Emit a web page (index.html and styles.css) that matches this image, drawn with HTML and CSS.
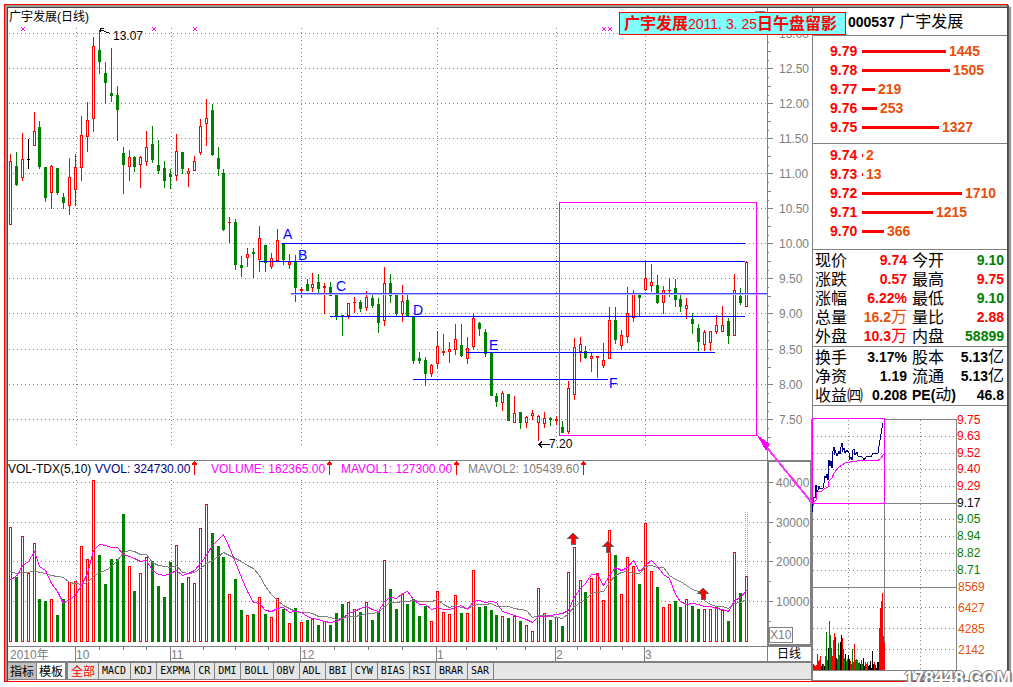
FILE: index.html
```html
<!DOCTYPE html>
<html lang="zh-CN">
<head>
<meta charset="utf-8">
<title>广宇发展 000537</title>
<link rel="stylesheet" href="styles.css">
</head>
<body>
<div class="window">
  <main class="charts">
    <svg class="kline" viewBox="8 8 804 654" role="img" aria-label="广宇发展 日线">
      <g id="grid"></g>
      <g id="candles"></g>
      <g id="volumes"></g>
      <g class="level">
        <path d="M282 243.5H745M259 261.5H745M330 316.5H745M466 352.5H715M413 379.5H608"/>
        <path class="soft" d="M290 294.5H767"/><path class="mid" d="M291 293.5H767"/>
      </g>
      <g class="letters">
        <text x="283" y="239">A</text><text x="298" y="260">B</text><text x="336" y="291">C</text>
        <text x="413" y="315">D</text><text x="489" y="350">E</text><text x="609" y="388">F</text>
      </g>
      <path class="axis" d="M8 460.5H812M767.5 8V461M8 646.5H812M8 661.5H812M767.5 646V662M755 11.5H765"/>
      <path class="axis thick" d="M768 461V646M767 461H812M767 645H812M811 461V646"/>
      <rect class="axis" x="769.5" y="627.5" width="23" height="15"/>
      <text class="muted" x="770" y="639">X10</text>
      <text x="9" y="21">广宇发展(日线)</text>
      <text x="777" y="658">日线</text>
      <text x="113" y="40">13.07</text><path class="ink" d="M110 33.5L100 29.5M104 28.5H100V32"/>
      <text x="549" y="448">7.20</text><path class="ink" d="M550 444.5H539M542 441.5L539 444.5L542 447.5"/>
      <path class="mark" d="M21 27l4 4m0-4l-4 4M152 27l4 4m0-4l-4 4M193 27l4 4m0-4l-4 4M602 27l4 4m0-4l-4 4M608 27l4 4m0-4l-4 4"/>
      <g>
        <text x="8" y="473">VOL-TDX(5,10)</text>
        <text class="navy" x="95" y="473">VVOL: 324730.00</text>
        <text class="pink" x="211" y="473">VOLUME: 162365.00</text>
        <text class="pink" x="341" y="473">MAVOL1: 127300.00</text>
        <text class="muted" x="468" y="473">MAVOL2: 105439.60</text>
        <path class="up" d="M194.5 475V461M192 463.5H197M193 462.5H196M192 464.5H197M329.5 475V461M327 463.5H332M328 462.5H331M327 464.5H332M456.5 475V461M454 463.5H459M455 462.5H458M454 464.5H459M583.5 475V461M581 463.5H586M582 462.5H585M581 464.5H586"/>
      </g>
      <g class="signal">
        <path d="M573 533l5 5h-3v6h-4v-6h-3z"/><path d="M608 541l5 5h-3v6h-4v-6h-3z"/><path d="M703 588l5 5h-3v6h-4v-6h-3z"/>
      </g>
      <path class="forecast" d="M745.5 512V576M747.5 512V576"/>
      <rect class="zoombox" x="559.5" y="202.5" width="197" height="233"/>
      <path class="link" d="M760 439L812 503"/><path class="head" d="M757 435L770 444L768 447L766 451Z"/>
    </svg>
    <nav class="tabs">
      <button class="tab dark">指标</button><button class="tab white">模板</button><button class="tab all">全部</button><button class="tab">MACD</button><button class="tab">KDJ</button><button class="tab">EXPMA</button><button class="tab">CR</button><button class="tab">DMI</button><button class="tab">BOLL</button><button class="tab">OBV</button><button class="tab">ADL</button><button class="tab">BBI</button><button class="tab">CYW</button><button class="tab">BIAS</button><button class="tab">RSI</button><button class="tab">BRAR</button><button class="tab">SAR</button>
    </nav>
  </main>
  <aside class="panel">
    <h1 class="name"><b>000537</b> 广宇发展</h1>
    <ul class="book asks">
      <li><b>9.79</b><i style="width:84px"></i><span>1445</span></li>
      <li><b>9.78</b><i style="width:88px"></i><span>1505</span></li>
      <li><b>9.77</b><i style="width:13px"></i><span>219</span></li>
      <li><b>9.76</b><i style="width:15px"></i><span>253</span></li>
      <li><b>9.75</b><i style="width:77px"></i><span>1327</span></li>
    </ul>
    <ul class="book bids">
      <li><b>9.74</b><i style="width:1px"></i><span>2</span></li>
      <li><b>9.73</b><i style="width:1px"></i><span>13</span></li>
      <li><b>9.72</b><i style="width:100px"></i><span>1710</span></li>
      <li><b>9.71</b><i style="width:71px"></i><span>1215</span></li>
      <li><b>9.70</b><i style="width:22px"></i><span>366</span></li>
    </ul>
    <table class="stats">
      <tr><th>现价</th><td class="red">9.74</td><th>今开</th><td class="green">9.10</td></tr>
      <tr><th>涨跌</th><td class="red">0.57</td><th>最高</th><td class="red">9.75</td></tr>
      <tr><th>涨幅</th><td class="red">6.22%</td><th>最低</th><td class="green">9.10</td></tr>
      <tr><th>总量</th><td class="orange">16.2<span>万</span></td><th>量比</th><td class="red">2.88</td></tr>
      <tr><th>外盘</th><td class="red">10.3<span>万</span></td><th>内盘</th><td class="green">58899</td></tr>
    </table>
    <table class="stats">
      <tr><th>换手</th><td>3.17%</td><th>股本</th><td>5.13<span>亿</span></td></tr>
      <tr><th>净资</th><td>1.19</td><th>流通</th><td>5.13<span>亿</span></td></tr>
      <tr><th>收益㈣</th><td>0.208</td><th class="pe">PE(<span>动</span>)</th><td>46.8</td></tr>
    </table>
    <svg class="intraday" viewBox="813 406 194 275" role="img" aria-label="分时走势">
      <path class="dots" d="M813 436.5H956M813 453.5H956M813 469.5H956M813 486.5H956M813 519.5H956M813 536.5H956M813 553.5H956M813 570.5H956M813 607.5H956M813 628.5H956M813 649.5H956M848.5 420V670M920.5 420V670"/>
      <path class="axis" d="M884 419.5H956.5V670.5H812M812 503.5H956M812 587.5H956M884.5 419V670M812 680.5H1007"/>
      <path class="axis thick" d="M812 419V681"/>
      <g id="ticks"></g>
      <path class="avg" d="M812.500 508L814 502L816 500V493L818 491H822L824 489L828 487L829 481L832 478L834 473L838 468L842 465L845 463L850 462L857 461L878 460.500L881 458L884 454"/>
      <path class="price" d="M812.500 512V504L814 497L815 498L816 485L817 492L818 490L819 486L820 489L823 488L824 483L825 476L826 478L827 474L828 480L829 460L830 466L831 461L832 468L833 451L834 447V455L835 450L837 456L839 451L840 454L841 447L842 443V452L844 448L845 453L847 450L849 453V460L851 457L852 460V451L854 449L855 455L857 452L858 456H861L863 458L864 460L866 457L869 456L871 457L873 453L876 454L878 453L880 440L882 428L883 423"/>
      <rect class="zoombox" x="812.5" y="418.5" width="72" height="85"/>
      <g class="scale">
        <g class="red"><text x="957" y="424">9.75</text><text x="957" y="440">9.63</text><text x="957" y="457">9.52</text><text x="957" y="473">9.40</text><text x="957" y="490">9.29</text></g>
        <text x="957" y="507">9.17</text>
        <g class="green"><text x="957" y="523">9.05</text><text x="957" y="540">8.94</text><text x="957" y="557">8.82</text><text x="957" y="574">8.71</text></g>
        <g class="orange"><text x="958" y="591">8569</text><text x="958" y="612">6427</text><text x="958" y="633">4285</text><text x="958" y="654">2142</text></g>
      </g>
    </svg>
  </aside>
  <div class="banner"><b>广宇发展</b>2011. 3. 25<b>日午盘留影</b></div>
  <div class="site">178448.COM</div>
</div>
<script src="chart.js"></script>
</body>
</html>
```

FILE: styles.css
```css
* { box-sizing: border-box; }
body {
  margin: 0;
  padding: 4px 5px 0 4px;
  background: #fff;
  color: #000;
  font: 12px/16px "Liberation Sans", "Noto Sans CJK SC", sans-serif;
}
.window {
  position: relative;
  display: grid;
  grid-template-columns: minmax(0, 1fr) 195px;
  border: 1px solid #f00;
  box-shadow: inset 2px 2px #999, inset 3px 3px #444, 1px 1px #555, 3px 3px 1px #999;
  padding: 3px 0 0 3px;
}
.charts { min-width: 0; }
svg { display: block; width: 100%; overflow: visible; }
svg path, svg rect { shape-rendering: crispEdges; }
.axis { stroke: gray; fill: none; }
.thick { stroke-width: 2; }
.dots { stroke: gray; fill: none; stroke-dasharray: 1 3; }
.muted { fill: gray; }
.navy { fill: #000080; }
.pink { fill: #f0f; }
.ink { stroke: #000; fill: none; }
.mark, .zoombox { stroke: #f0f; fill: none; }
.link { stroke: #f3f; stroke-width: 2; }
.head { fill: #f0f; }
.up { stroke: #f00; stroke-width: 1; }
.level path { stroke: #00f; }
.level .mid { stroke: #44f; }
.level .soft { stroke: #bbf; }
.letters { font-size: 14px; fill: #00f; }
.r { stroke: #f00; fill: #fff; }
.rf { fill: #f00; }
.g { fill: #008000; }
.k { fill: #000; }
.ma { fill: none; }
.ma5, .avg { stroke: #f0f; fill: none; }
.ma10 { stroke: gray; }
.price { stroke: #000080; fill: none; }
.signal path { fill: #f00; stroke: #666; }
.forecast { stroke: #c0c000; stroke-dasharray: 1 1; }
.tabs {
  display: flex;
  height: 18px;
  border: solid gray;
  border-width: 1px 0;
  background: #e6e6e6;
}
.tab {
  padding: 0 4px 0 3px;
  border: 0;
  border-right: 1px solid gray;
  background: #e6e6e6;
  color: #000;
  font: 10px/16px "DejaVu Sans Mono", monospace;
}
.dark, .white, .all {
  padding: 0 2px;
  font: 12px/16px "Noto Sans CJK SC", sans-serif;
}
.dark { background: #c0c0c0; }
.white { background: #fff; border-right-width: 3px; }
.all { color: #f00; padding: 0 3px; }
.panel { border-left: 1px solid gray; }
.name {
  margin: 0;
  height: 28px;
  padding: 0 0 0 35px;
  border-bottom: 1px solid gray;
  font-weight: 400;
  font-size: 16px;
  line-height: 28px;
}
.name b { font-size: 14px; }
.book {
  margin: 0;
  padding: 6px 0;
  border-bottom: 1px solid gray;
  list-style: none;
  font: bold 14px/19px "Liberation Sans", sans-serif;
}
.bids { padding: 2px 0 8px; }
.book li {
  display: flex;
  align-items: center;
  gap: 3px;
  height: 19px;
  padding-left: 17px;
}
.book b { width: 29px; color: #f00; }
.book i { height: 3px; background: #f00; }
.book span, .orange { color: #e6500a; fill: #e6500a; }
.red { color: #f00; fill: #f00; }
.green { color: #008000; fill: #008000; }
.stats {
  width: 100%;
  table-layout: fixed;
  border-collapse: separate;
  border-spacing: 0;
  font: 16px/19px "Liberation Sans", "Noto Sans CJK SC", sans-serif;
  border-bottom: 1px solid gray;
  padding-top: 1px;
}
.stats th, .stats td { height: 19px; padding: 0; white-space: nowrap; line-height: 19px; }
.stats th { width: 48px; padding-left: 2px; text-align: left; font-weight: 400; }
.stats td { text-align: right; font-weight: 700; font-size: 14px; padding-right: 3px; }
.stats span { font-weight: 400; font-size: 16px; line-height: 14px; }
.stats .pe { font-size: 14px; font-weight: 700; }
.scale { font-size: 12px; }
.banner {
  position: absolute;
  top: 7px;
  right: 161px;
  width: 227px;
  height: 23px;
  border: 1px solid #f00;
  background: #80ffff;
  color: #f00;
  padding-left: 4px;
  font-size: 14px;
  line-height: 21px;
  white-space: nowrap;
}
.banner b { font-size: 16px; }
.site {
  position: absolute;
  right: -4px;
  bottom: -6px;
  color: #fff;
  font: bold 18px/18px "Liberation Sans", sans-serif;
  text-shadow: 1px 0 gray, -1px 0 gray, 0 -1px gray, 1px 1px gray, 2px 2px gray;
}
```

FILE: chart.js
```js
// Each day: high, body top, body bottom, low, volume top, kind
// kinds: r hollow rise, g fall, k unchanged
const days = `
154 161 225 225 527 r|152 166 185 186 577 g|133 159 178 181 536 r|139 159 160 169 573 k|112 131 146 146 543 r
121 127 167 169 599 g|167 167 198 202 601 g|165 166 193 209 599 r|168 168 193 195 615 g|193 197 203 209 599 g
158 177 206 215 582 r|154 167 190 206 581 r|116 135 168 181 546 r|102 120 137 152 559 r|37 46 119 132 480 r
30 50 62 74 555 g|62 73 83 104 584 g|48 93 96 102 559 g|86 95 110 141 559 g|147 153 165 194 514 g
150 157 167 181 566 r|156 157 167 172 591 g|156 157 165 188 573 r|131 147 162 166 557 r|126 144 160 163 561 g
140 165 171 174 586 g|161 168 181 188 597 g|169 174 177 189 562 g|134 151 176 181 545 r|152 152 169 174 583 g
168 171 174 187 577 r|156 161 171 171 583 r|119 126 153 155 528 r|99 118 124 146 504 r|104 110 155 156 533 g
147 158 169 176 546 g|169 173 230 231 557 g|217 222 223 243 594 r|219 222 265 270 579 g|256 265 268 277 610 g
248 254 258 267 615 r|248 252 254 278 614 g|226 238 260 272 597 r|245 245 263 272 614 g|253 258 267 269 617 r
229 240 261 261 598 r|243 243 260 265 609 g|254 262 265 269 623 r|255 261 288 302 608 g|287 289 291 298 622 r
279 284 291 291 620 g|273 284 288 292 619 r|274 282 289 293 625 g|283 286 288 314 621 r|282 287 296 296 625 g
294 294 316 320 613 g|315 315 317 336 604 g|303 303 316 319 602 r|297 302 303 313 609 r|300 302 309 312 612 g
291 297 308 311 602 r|295 298 306 308 620 g|298 304 323 333 612 g|267 283 321 326 560 r|274 283 296 303 589 g
294 295 314 316 609 g|285 301 314 322 594 r|294 300 316 316 604 g|316 316 361 364 599 g|352 358 361 364 616 g
357 360 374 386 606 g|364 365 374 377 621 r|331 346 364 369 591 r|334 351 353 356 612 r|342 349 352 363 614 r
324 339 350 355 595 r|324 345 356 357 613 g|337 348 359 364 613 r|314 318 347 350 570 r|322 323 329 336 607 g
329 332 354 357 606 g|352 352 396 396 610 g|393 396 402 407 615 g|391 393 403 411 616 r|394 394 421 421 618 g
396 413 423 423 616 r|412 412 423 429 621 g|416 417 423 428 625 r|410 413 416 420 631 r|415 416 423 441 588 r
412 418 424 428 613 r|417 418 420 426 620 g|416 419 421 425 617 r|421 427 433 433 626 g|381 388 432 434 572 r
338 347 395 400 547 r|337 344 352 362 580 r|346 351 358 359 592 g|352 356 359 372 578 r|356 356 358 378 573 r
343 360 366 368 600 r|307 320 359 359 530 r|307 320 340 344 555 g|330 335 346 350 594 r|287 313 337 343 557 r
290 293 318 322 566 r|294 295 298 316 584 g|261 278 290 291 523 r|264 282 286 292 571 r|275 285 303 304 587 g
286 290 303 314 607 r|278 290 291 297 604 r|279 288 300 307 601 g|295 299 307 312 607 g|298 305 309 319 599 r
313 319 324 334 606 g|324 328 342 351 609 g|330 332 345 351 609 r|331 331 343 351 609 r|315 325 332 334 607 r
306 325 332 332 610 r|318 321 336 344 621 g|274 290 336 336 552 r|288 296 303 305 593 g|261 262 307 307 576 r
`.trim().split(/[\n|]/).map(row => row.split(' ').map((v, i) => (i < 5 ? +v : v)));

const dayX = i => Math.floor(10.3 + i * 5.935);
const rect = (cls, x, y, w, h) => `<rect class="${cls}" x="${x}" y="${y}" width="${w}" height="${h}"/>`;
const put = (id, html) => { document.getElementById(id).innerHTML = html; };

// Grid, price scale, volume scale and calendar
let grid = '', dots = '', ticks = '';
const priceRows = [33, 68, 103, 138, 173, 208, 243, 278, 313, 349, 384, 419];
priceRows.forEach((y, i) => {
  dots += `M9 ${y + 0.5}H767`;
  ticks += `M767 ${y + 0.5}H773M767 ${y + 18.5}H771M767 ${y + 9.5}H769M767 ${y + 27.5}H769`;
  grid += `<text class="muted" x="779" y="${y + 5}">${(13 - i / 2).toFixed(2)}</text>`;
});
[482, 522, 561, 601].forEach((y, i) => {
  dots += `M9 ${y + 0.5}H767`;
  ticks += `M767 ${y + 0.5}H773M767 ${y + 20.5}H771`;
  grid += `<text class="muted" x="776" y="${y + 5}">${40000 - i * 10000}</text>`;
});
[[76, '10'], [171, '11'], [301, '12'], [437, '1'], [556, '2'], [645, '3']].forEach(([x, label]) => {
  dots += `M${x + 0.5} 28V446M${x + 0.5} 480V642`;
  ticks += `M${x - 0.5} 646V662`;
  grid += `<text class="muted" x="${x}" y="659">${label}</text>`;
});
[99, 123, 146, 203, 235, 268, 334, 368, 402, 466, 496, 525, 577, 600, 622].forEach(x => {
  ticks += `M${x + 0.5} 646V650`;
});
grid += '<text class="muted" x="10" y="659">2010年</text>';
put('grid', `<path class="dots" d="${dots}"/><path class="axis" d="${ticks}"/>${grid}`);

// Candles and volume columns
let candles = '', volumes = '';
days.forEach(([high, top, bottom, low, vol, kind], i) => {
  const x = dayX(i);
  const rise = kind === 'r';
  const wick = rise ? 'rf' : kind;
  candles += rect(wick, x, high, 1, Math.max(1, low - high));
  if (rise && bottom - top > 2) {
    candles += rect('r', x - 0.5, top + 0.5, 2, bottom - top - 1);
  } else {
    candles += rect(wick, x - 1, top, 3, Math.max(1, bottom - top));
  }
  volumes += kind === 'g'
    ? rect('g', x - 1, vol, 3, 642 - vol)
    : rect('r', x - 0.5, vol + 0.5, 2, 641 - vol);
});
put('candles', candles);

// Moving averages; the first days depend on earlier sessions
const average = (n, lead) => days.map((d, i) => {
  if (i < lead.length) return lead[i];
  const span = days.slice(i - n + 1, i + 1);
  return Math.round(span.reduce((sum, s) => sum + s[4], 0) / n);
});
const line = (cls, values) =>
  `<polyline class="ma ${cls}" shape-rendering="crispEdges" points="${values.map((v, i) => `${dayX(i) + 0.5},${v + 0.5}`).join(' ')}"/>`;
volumes += line('ma10', average(10, [571, 573, 572, 572, 570, 572, 573, 575, 576]));
volumes += line('ma5', average(5, [579, 576, 565, 561]));
put('volumes', volumes);

// Intraday volume columns, one pixel each
const heights = [6,5,4,5,16,9,10,14,4,6,6,4,14,38,10,22,49,35,22,14,30,37,33,12,11,27,15,28,35,32,21,12,16,9,11,15,11,9,6,21,8,26,10,11,10,7,8,6,10,6,12,4,8,6,8,4,5,9,2,19,6,8,5,2,8,8,42,62,69,77,34,28];
const tones = 'grrrrrgrkkrkrgrkrggrrrkkrgrkkrrgkgrkkrgggrrggggkrgkkgrgkkkkkkrkkkkkkrrrrrr'.split('');
const toneClass = { g: 'g', r: 'rf', k: 'k' };
put('ticks', heights.map((h, i) => rect(toneClass[i > 65 ? 'r' : tones[i]], 813 + i, 670 - h, 1, h)).join(''));
```
